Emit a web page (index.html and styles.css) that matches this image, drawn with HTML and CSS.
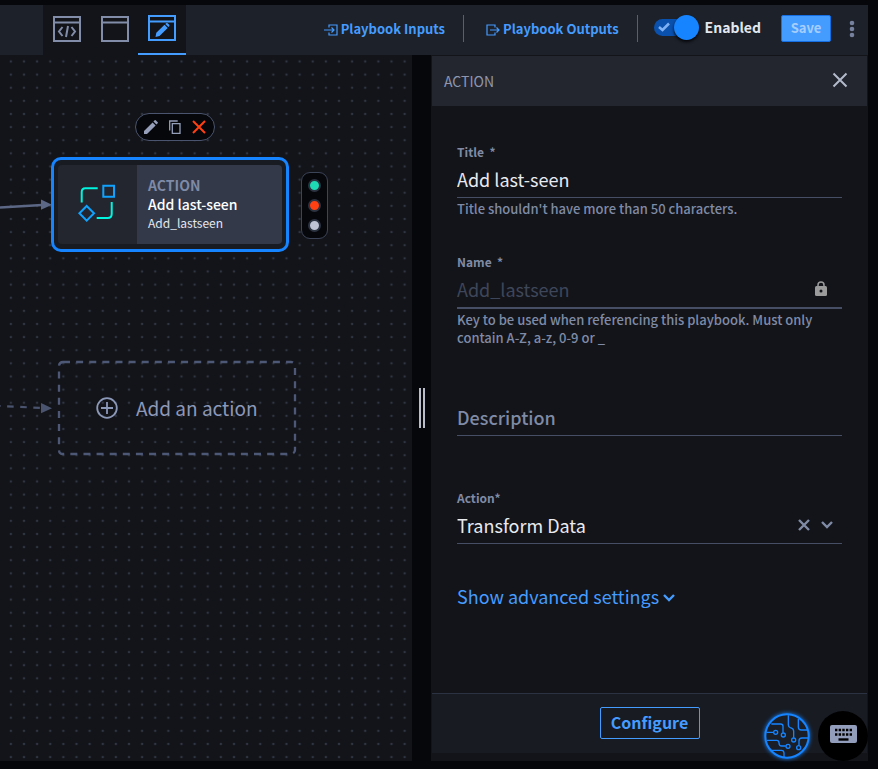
FILE: index.html
```html
<!DOCTYPE html>
<html lang="en">
<head>
<meta charset="utf-8">
<meta name="viewport" content="width=device-width, initial-scale=1">
<title>Playbook editor</title>
<link rel="stylesheet" href="styles.css">
</head>
<body>
<div class="app">
  <header class="topbar">
    <nav class="views" aria-label="View">
      <button class="view" type="button" aria-label="Code view">
        <svg width="28" height="26" viewBox="0 0 28 26" fill="none" stroke="currentColor" stroke-width="2"><path d="M1 1h26v24H1zM1 6.500h26"/><path d="M9.500 11 6 15.500l3.500 4.500M18.500 11l3.500 4.500-3.500 4.500M15 10l-2 11"/></svg>
      </button>
      <button class="view" type="button" aria-label="Form view">
        <svg width="28" height="26" viewBox="0 0 28 26" fill="none" stroke="currentColor" stroke-width="2"><path d="M1 1h26v24H1zM1 6.500h26"/></svg>
      </button>
      <button class="view view-active" type="button" aria-label="Visual editor" aria-pressed="true">
        <svg width="28" height="26" viewBox="0 0 28 26" fill="none" stroke="currentColor" stroke-width="2"><path d="M1 1h26v24H1zM1 6.500h26"/><path fill="currentColor" stroke="none" d="m7.500 22 .8-4.200 8.200-8.100 3.200 3.200-8.200 8.200zM17.300 9l.8-.8q.8-.6 1.600.1l1.500 1.500q.6.8 0 1.500l-.8.8z"/></svg>
      </button>
    </nav>
    <div class="actions">
      <a class="io" href="#inputs">
        <svg width="14" height="12" viewBox="0 0 14 12" fill="none" stroke="currentColor" stroke-width="1.200"><path d="M5 3.500V1h8v10H5V8.500M0 6h10M7.500 3.500 10 6 7.500 8.500"/></svg>
        Playbook Inputs
      </a>
      <span class="rule"></span>
      <a class="io" href="#outputs">
        <svg width="14" height="12" viewBox="0 0 14 12" fill="none" stroke="currentColor" stroke-width="1.200"><path d="M9 3.500V1H1v10h8V8.500M4 6h9M10.500 3.500 13 6l-2.500 2.500"/></svg>
        Playbook Outputs
      </a>
      <span class="rule"></span>
      <label class="toggle">
        <span class="switch">
          <input type="checkbox" checked>
          <svg width="12" height="10" viewBox="0 0 12 10" fill="none" stroke="currentColor" stroke-width="2.500"><path d="m1 5 3.500 3L11 1.500"/></svg>
        </span>
        Enabled
      </label>
      <button class="save" type="button">Save</button>
      <button class="more" type="button" aria-label="More options">
        <svg width="6" height="18" viewBox="0 0 6 18" fill="currentColor"><circle cx="3" cy="3" r="2.300"/><circle cx="3" cy="9" r="2.300"/><circle cx="3" cy="15" r="2.300"/></svg>
      </button>
    </div>
  </header>

  <main class="workspace">
    <section class="canvas" aria-label="Playbook canvas">
      <svg class="grid" width="100%" height="100%">
        <defs><pattern id="dots" x="4.300" y="-.1" width="13.125" height="13.125" patternUnits="userSpaceOnUse"><circle cx="6.560" cy="6.560" r="1.250" fill="#2f3542"/></pattern></defs>
        <rect width="100%" height="100%" fill="url(#dots)"/>
        <path d="M0 152.500 42 150" stroke="#5b6785" stroke-width="2.500"/>
        <path d="m41 144.500 11 5.200-11 5z" fill="#5b6785"/>
        <path d="M-6 350.700 42 353" stroke="#4a546e" stroke-width="2.200" stroke-dasharray="6.560 6.560"/>
        <path d="m41 348 11 5.200-11 5z" fill="#4a546e"/>
      </svg>

      <div class="node-tools">
        <button type="button" aria-label="Edit"><svg width="14" height="14" viewBox="0 0 14 14" fill="#959fba"><path d="M0 14v-3l8.600-8.600 3 3L3 14zM9.400 1.600 10.700.3q.5-.5 1 0l2 2q.5.500 0 1l-1.300 1.300z"/></svg></button>
        <button type="button" aria-label="Duplicate"><svg width="14" height="14" viewBox="0 0 14 14" fill="none" stroke="#959fba" stroke-width="1.300"><path d="M1.700 10.500V1h8M4.300 3.700H12v9.600H4.300z"/></svg></button>
        <button type="button" aria-label="Delete"><svg width="14" height="14" viewBox="0 0 14 14" stroke="#ff4013" stroke-width="2"><path d="m1 1 12 12M13 1 1 13"/></svg></button>
      </div>

      <article class="node">
        <div class="node-icon">
          <svg width="42" height="42" viewBox="76 182 42 42" fill="none" stroke-width="2"><g stroke="#00f5e0"><path d="M81.700 202.500V192q0-3.700 3.700-3.700h12.300M111.700 202v12q0 4-4 4h-11"/></g><g stroke="#0fa3ff"><path d="M103.300 185.700H114v11h-10.700zM86.700 206l7.300 7.300-7.300 7.300-7.300-7.300z"/></g></svg>
        </div>
        <div class="node-text">
          <span class="node-kind">ACTION</span>
          <strong>Add last-seen</strong>
          <span class="node-key">Add_lastseen</span>
        </div>
      </article>

      <div class="status"><i class="ok"></i><i class="fail"></i><i class="idle"></i></div>

      <button class="add" type="button">
        <svg class="add-frame" width="240" height="96" viewBox="0 0 240 96" fill="none"><rect x="2" y="2" width="236" height="92" rx="4" stroke="#4d5876" stroke-width="2.300" stroke-dasharray="7 6.120"/></svg>
        <svg width="22" height="22" viewBox="0 0 22 22" fill="none" stroke="currentColor" stroke-width="1.800"><circle cx="11" cy="11" r="9.800"/><path d="M11 5v12M5 11h12"/></svg>
        Add an action
      </button>
    </section>

    <div class="splitter" role="separator" aria-orientation="vertical"><i></i><i></i></div>

    <aside class="panel">
      <div class="panel-head">
        <h2>ACTION</h2>
        <button type="button" aria-label="Close"><svg width="16" height="16" viewBox="0 0 16 16" stroke="currentColor" stroke-width="2"><path d="m1.500 1.500 13 13M14.500 1.500l-13 13"/></svg></button>
      </div>
      <form class="fields">
        <div class="field">
          <label for="title">Title &nbsp;*</label>
          <input class="control" id="title" type="text" value="Add last-seen">
          <p>Title shouldn't have more than 50 characters.</p>
        </div>
        <div class="field">
          <label for="name">Name &nbsp;*</label>
          <div class="control control-locked">
            <input id="name" type="text" value="Add_lastseen" disabled>
            <svg width="12" height="15" viewBox="0 0 12 15"><path d="M3 6V4q0-3 3-3t3 3v2" fill="none" stroke="#9b9b9b" stroke-width="1.500"/><rect y="5" width="12" height="10" rx="1.500" fill="#9b9b9b"/><circle cx="6" cy="10" r="1.500" fill="#131419"/></svg>
          </div>
          <p>Key to be used when referencing this playbook. Must only contain A-Z, a-z, 0-9 or _</p>
        </div>
        <div class="field field-empty">
          <label for="description">Description</label>
          <input class="control" id="description" type="text">
        </div>
        <div class="field field-action">
          <label for="action">Action*</label>
          <div class="control">
            <select id="action"><option>Transform Data</option></select>
            <button type="button" aria-label="Clear action"><svg width="12" height="12" viewBox="0 0 12 12" stroke="currentColor" stroke-width="2.400"><path d="m1 1 10 10M11 1 1 11"/></svg></button>
            <svg width="12" height="8" viewBox="0 0 12 8" fill="none" stroke="currentColor" stroke-width="2.400"><path d="m1 1 5 5 5-5"/></svg>
          </div>
        </div>
        <button class="advanced" type="button">Show advanced settings <svg width="12" height="8" viewBox="0 0 12 8" fill="none" stroke="currentColor" stroke-width="2.400"><path d="m1 1 5 5 5-5"/></svg></button>
      </form>
      <footer class="panel-foot"><button type="button">Configure</button></footer>
    </aside>
  </main>

  <div class="floating">
    <button class="assist" type="button" aria-label="Assistant">
      <svg width="48" height="48" viewBox="549 95 144 144" fill="none" stroke="#1684ff" stroke-width="4"><circle cx="621" cy="167" r="65" fill="#1a1e27" stroke-width="6"/><path d="M559 156h21M574 131h28q7 0 7 7v19M625 105v29q0 6 6 8 10 3 10 10v20M655 115v25q0 9 9 9h18M561 180h29q7 0 7 7 0 10 8 10h12M685 173h-19q-9 0-9 9v13M571 210h33q8 0 8 8v12"/><circle cx="587" cy="156" r="6"/><circle cx="610" cy="164" r="6"/><circle cx="641" cy="179" r="6"/><circle cx="624" cy="198" r="6"/><circle cx="656" cy="202" r="6"/></svg>
    </button>
    <button class="keys" type="button" aria-label="Keyboard shortcuts">
      <svg width="27" height="18" viewBox="0 0 27 18"><rect width="27" height="18" rx="2" fill="#929dbb"/><path d="M5 5h17M5 9.500h17" stroke="#000" stroke-width="2.400" stroke-dasharray="2.400 1.250"/><path d="M8.500 14.500h10" stroke="#000" stroke-width="2.400"/></svg>
    </button>
  </div>
</div>
</body>
</html>
```
FILE: styles.css
```css
* { box-sizing: border-box; }

body {
  margin: 0;
  background: #06070b;
  color: #e4e7ee;
  font: 14px/18px "Noto Sans CJK SC", "Noto Sans", sans-serif;
}

button, input, select {
  margin: 0;
  padding: 0;
  border: 0;
  background: none;
  color: inherit;
  font: inherit;
}

button { cursor: pointer; }
svg { display: block; flex: none; }

.app {
  position: relative;
  display: flex;
  flex-direction: column;
  min-height: 100vh;
  padding: 5px 10px 8px 0;
}

.topbar {
  display: flex;
  justify-content: space-between;
  height: 50px;
  padding: 0 13px 0 43px;
  background: #1d2129;
}

.views { display: flex; width: 143px; background: #131419; }

.view {
  display: grid;
  flex: 1;
  place-items: center;
  padding-bottom: 1px;
  border-bottom: 2px solid transparent;
  color: #828da9;
}

.view-active { border-color: #459cff; color: #459cff; padding-bottom: 3px; }

.actions { display: flex; align-items: center; padding-bottom: 3px; }

.io {
  display: flex;
  align-items: center;
  gap: 3px;
  color: #459cff;
  font-size: 13px;
  font-weight: 700;
  text-decoration: none;
  white-space: nowrap;
}

.io svg { margin-top: 2px; }

.rule { width: 1px; height: 27px; margin: 0 22px 0 18px; background: #5c5f66; }

.toggle {
  display: flex;
  align-items: center;
  gap: 6px;
  margin-left: -6px;
  padding-bottom: 3px;
  font-weight: 700;
}

.switch { position: relative; display: flex; width: 45px; height: 25px; align-items: center; }

.switch input {
  appearance: none;
  width: 40px;
  height: 17px;
  border-radius: 9px;
  background: #0a51ae;
}

.switch input::after {
  content: "";
  position: absolute;
  top: 0;
  right: 0;
  width: 25px;
  height: 25px;
  border-radius: 50%;
  background: #1684ff;
  box-shadow: 0 2px 3px #06070b;
}

.switch svg { position: absolute; left: 4px; color: #7eb2f4; }

.save {
  width: 50px;
  height: 27px;
  margin: 0 18px 0 20px;
  padding-bottom: 2px;
  border: 1px solid #1670e4;
  border-radius: 2px;
  background: #459cff;
  color: #a5ceff;
  font-size: 13px;
  font-weight: 700;
}

.more { color: #76819d; }

.workspace {
  display: grid;
  flex: 1;
  grid-template-columns: minmax(0, 412fr) 19px minmax(0, 437fr);
}

.canvas { position: relative; overflow: hidden; background: #131419; }

.grid { position: absolute; inset: 0; }

.node-tools {
  position: absolute;
  top: 58px;
  left: 135px;
  display: flex;
  align-items: center;
  justify-content: center;
  gap: 10px;
  width: 80px;
  height: 28px;
  border: 1px solid #4a546e;
  border-radius: 14px;
  background: #06070b;
}

.node {
  position: absolute;
  top: 102px;
  left: 51px;
  display: flex;
  width: 238px;
  height: 95px;
  padding: 5px 4px;
  border: 3px solid #1684ff;
  border-radius: 10px;
  background: #181b22;
}

.node-icon {
  display: grid;
  flex: none;
  place-items: center;
  width: 79px;
  padding: 0 1px 3px 0;
  border-radius: 4px 0 0 4px;
  background: #23262f;
}

.node-text {
  display: flex;
  flex: 1;
  flex-direction: column;
  justify-content: center;
  padding: 0 0 3px 11px;
  border-radius: 0 4px 4px 0;
  background: #333948;
}

.node-kind { color: #7f8aa7; font-weight: 700; line-height: 20px; }
.node-text strong { color: #fff; font-weight: 500; line-height: 19px; }
.node-key { font-size: 12px; line-height: 18px; }

.status {
  position: absolute;
  top: 117px;
  left: 301px;
  display: flex;
  flex-direction: column;
  align-items: center;
  justify-content: center;
  gap: 7px;
  width: 27px;
  height: 67px;
  border: 1px solid #3c4457;
  border-radius: 9px;
  background: #06070b;
}

.status i { width: 13px; height: 13px; border: 2px solid #2c3341; border-radius: 50%; }
.ok { background: #1fdbb5; }
.fail { background: #ff4013; }
.idle { background: #bec4d4; }

.add {
  position: absolute;
  top: 305px;
  left: 57px;
  display: flex;
  align-items: center;
  gap: 18px;
  width: 240px;
  height: 96px;
  padding-left: 39px;
  color: #8c98b8;
  font-size: 19px;
}

.add-frame { position: absolute; inset: 0; }

.splitter { display: flex; align-items: center; justify-content: center; gap: 2px; }
.splitter i { width: 2px; height: 40px; background: #b8bbc8; }

.panel {
  display: flex;
  flex-direction: column;
  min-width: 0;
  padding: 1px 1px 8px;
  background: #131419;
}

.panel-head {
  display: flex;
  align-items: center;
  justify-content: space-between;
  height: 50px;
  padding: 0 19px 0 12px;
  background: #23262f;
}

.panel-head h2 { margin: 0; color: #8d97b1; font-size: 14px; font-weight: 400; }
.panel-head button { color: #b3bacb; padding-bottom: 3px; }

.fields {
  display: flex;
  flex: 1;
  flex-direction: column;
  align-items: stretch;
  gap: 34px;
  padding: 37px 25px;
  color: #7f8ba6;
}

.field { display: flex; flex-direction: column; font-size: 13px; font-weight: 500; }
.field label { font-size: 12px; font-weight: 700; }
.field p { margin: 2px 0 0; }

.control {
  display: flex;
  align-items: center;
  width: 100%;
  height: 37px;
  padding-bottom: 1px;
  border-bottom: 1px solid #454e64;
  font-size: 18px;
  font-weight: 400;
  line-height: 26px;
}

input.control, .control select { color: #e8eaf0; }
.control input, .control select { flex: 1; min-width: 0; appearance: none; }
.control input { color: #3e4659; }
.control button { margin: 0 11px; }
.control > svg:last-child { margin-right: 9px; }

.control-locked { height: 38px; border-bottom-width: 2px; }
.control-locked > svg:last-child { margin-right: 15px; }

.field-empty { position: relative; padding-top: 18px; }

.field-empty label {
  position: absolute;
  bottom: 6px;
  font-size: 18px;
  font-weight: 500;
  line-height: 26px;
}

.field:first-child { margin-bottom: 1px; }
.field-action { margin-top: 19px; }

.advanced {
  display: flex;
  align-items: center;
  align-self: flex-start;
  gap: 4px;
  margin-top: 6px;
  color: #459cff;
  font-size: 18px;
  line-height: 24px;
}

.advanced svg { margin-top: 3px; }

.panel-foot {
  display: flex;
  justify-content: center;
  padding: 13px 0 14px;
  border-top: 1px solid #2b3342;
  background: #181b22;
}

.panel-foot button {
  width: 100px;
  height: 32px;
  padding-bottom: 2px;
  border: 1px solid #459cff;
  border-radius: 2px;
  color: #459cff;
  font-size: 16px;
  font-weight: 700;
}

.floating {
  position: absolute;
  right: 10px;
  bottom: 8px;
  display: flex;
  align-items: center;
  gap: 7px;
}

.assist { border-radius: 50%; filter: drop-shadow(0 0 2px #1684ff); }

.keys {
  display: grid;
  place-items: center;
  width: 50px;
  height: 50px;
  padding-bottom: 4px;
  border-radius: 50%;
  background: #000;
}
```
